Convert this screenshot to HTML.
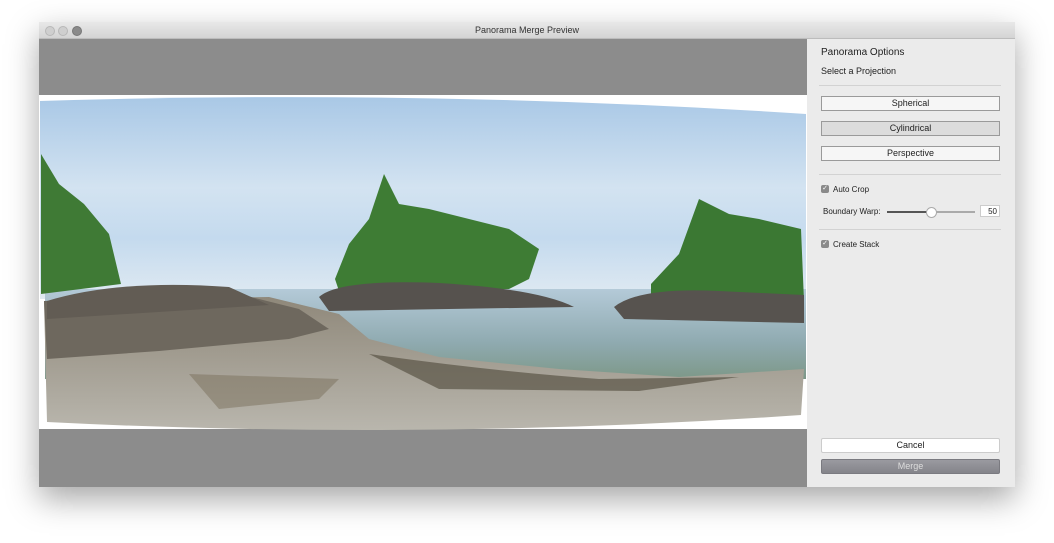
<!DOCTYPE html>
<html><head><style>
body{margin:0;width:1054px;height:543px;background:#fff;position:relative;overflow:hidden;font-family:"Liberation Sans",sans-serif;}
.win{position:absolute;left:39px;top:22px;width:976px;height:465px;box-shadow:0 12px 30px rgba(0,0,0,.35);background:#ebebeb;}
.title{position:absolute;left:0;top:0;width:976px;height:16px;background:linear-gradient(#e8e8e8,#d4d4d4);border-bottom:1px solid #bcbcbc;font-size:9px;text-align:center;line-height:16px;color:#333;}
.dot{position:absolute;top:4px;width:8px;height:8px;border-radius:50%;background:#cfcfcf;border:0.5px solid #b8b8b8;}
.left{position:absolute;left:0;top:17px;width:768px;height:448px;background:#8c8c8c;}
.panel{position:absolute;left:768px;top:17px;width:208px;height:448px;background:#ebebeb;font-size:9px;color:#222;}
.btn{position:absolute;left:14px;width:177px;height:13px;border:1px solid #9a9a9a;background:#f6f6f6;text-align:center;line-height:13px;font-size:9px;}
.hr{position:absolute;left:12px;width:182px;height:1px;background:#d2d2d2;}
.cb{position:absolute;left:14px;width:8px;height:8px;background:#8a8a8a;border-radius:2px;color:#fff;font-size:7px;line-height:8px;text-align:center;}
</style></head><body>
<div class="win">
<div class="title"><span class="dot" style="left:6px"></span><span class="dot" style="left:19px"></span><span class="dot" style="left:33px;background:#8a8a8a;border-color:#777"></span>Panorama Merge Preview</div>
<div class="left">
<svg width="768" height="448" style="position:absolute;left:0;top:0">
<defs>
<linearGradient id="sky" x1="0" y1="0" x2="0" y2="1"><stop offset="0" stop-color="#a9c8e6"/><stop offset=".45" stop-color="#d3e3f1"/><stop offset=".7" stop-color="#c4daee"/><stop offset="1" stop-color="#e0eaf2"/></linearGradient>
<linearGradient id="wat" x1="0" y1="0" x2="0" y2="1"><stop offset="0" stop-color="#b4cad8"/><stop offset=".6" stop-color="#8faab0"/><stop offset="1" stop-color="#7d9888"/></linearGradient>
<linearGradient id="beach" x1="0" y1="0" x2="0" y2="1"><stop offset="0" stop-color="#8f887a"/><stop offset="1" stop-color="#b9b6ad"/></linearGradient>
</defs>
<rect x="0" y="56" width="768" height="334" fill="#fff"/>
<path d="M1 62 Q384 50 767 75 L767 260 L1 260 Z" fill="url(#sky)"/>
<path d="M6 250 L767 250 L767 340 L6 340 Z" fill="url(#wat)"/>
<path d="M5 262 L230 258 L300 275 L330 300 L400 318 L520 330 L640 338 L765 330 L762 376 Q384 402 8 383 Z" fill="url(#beach)"/>
<path d="M5 262 L200 255 L260 270 L290 290 L250 300 L120 312 L8 320 Z" fill="#6e685e"/>
<path d="M330 315 Q450 332 560 340 L700 338 L600 352 L400 350 Z" fill="#5a5446" opacity=".7"/>
<path d="M150 335 L300 340 L280 360 L180 370 Z" fill="#7a6f5c" opacity=".5"/>
<path d="M2 115 L20 145 L45 165 L70 195 L82 245 L2 255 Z" fill="#3f7a35"/>
<path d="M296 240 L310 205 L330 180 L345 135 L360 165 L390 170 L430 180 L470 190 L500 210 L490 240 L470 250 L300 252 Z" fill="#3e7c34"/>
<path d="M280 258 Q300 240 400 244 Q500 250 535 268 L290 272 Z" fill="#56524e"/>
<path d="M612 245 L640 215 L660 160 L690 175 L720 180 L762 190 L765 262 L612 262 Z" fill="#3b7833"/>
<path d="M575 268 Q600 248 680 252 L765 256 L765 284 L585 280 Z" fill="#57534f"/>
<path d="M8 262 Q80 240 190 248 L230 266 L8 280 Z" fill="#625c54"/>
</svg>
</div>
<div class="panel">
<div style="position:absolute;left:14px;top:8px;font-size:10px">Panorama Options</div>
<div style="position:absolute;left:14px;top:27px">Select a Projection</div>
<div class="hr" style="top:46px"></div>
<div class="btn" style="top:57px">Spherical</div>
<div class="btn" style="top:82px;background:#dcdcdc">Cylindrical</div>
<div class="btn" style="top:107px">Perspective</div>
<div class="hr" style="top:135px"></div>
<div class="cb" style="top:146px">✓</div><div style="position:absolute;left:26px;top:146px;font-size:8px">Auto Crop</div>
<div style="position:absolute;left:16px;top:168px;font-size:8px">Boundary Warp:</div>
<div style="position:absolute;left:80px;top:172px;width:88px;height:2px;background:#aaa"></div>
<div style="position:absolute;left:80px;top:172px;width:44px;height:2px;background:#555"></div>
<div style="position:absolute;left:119px;top:168px;width:9px;height:9px;border-radius:50%;background:#fff;border:1px solid #aaa"></div>
<div style="position:absolute;left:173px;top:166px;width:20px;height:12px;background:#fff;border:1px solid #ccc;font-size:8px;text-align:right;line-height:12px;box-sizing:border-box;padding-right:2px">50</div>
<div class="hr" style="top:190px"></div>
<div class="cb" style="top:201px">✓</div><div style="position:absolute;left:26px;top:201px;font-size:8px">Create Stack</div>
<div class="btn" style="top:399px;background:#fff;border-color:#ccc;border-radius:2px">Cancel</div>
<div class="btn" style="top:420px;background:linear-gradient(#9a9aa0,#84848a);border-color:#7a7a80;color:#ddd;border-radius:2px">Merge</div>
</div>
</div>
</body></html>
